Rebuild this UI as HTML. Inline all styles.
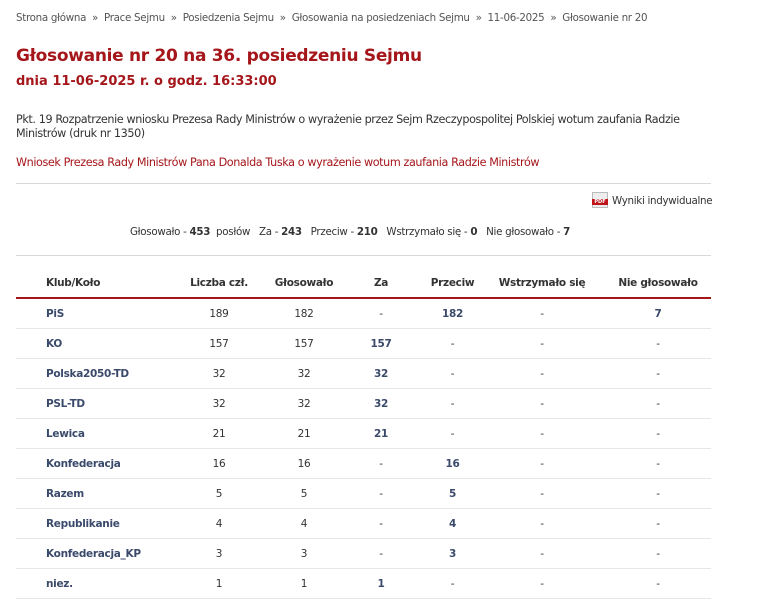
<!DOCTYPE html>
<html><head><meta charset="utf-8"><style>
body{margin:0;background:#fff;font-family:"DejaVu Sans","Liberation Sans",sans-serif;color:#333;width:765px;height:605px;overflow:hidden;position:relative}
.a{position:absolute;white-space:nowrap}
.bc{top:12px;left:16px;font-size:10.3px;color:#555;letter-spacing:-0.3px}
h1{position:absolute;top:46px;left:16px;margin:0;font-size:17px;color:#a5161b;font-weight:bold;letter-spacing:-0.3px}
h2{position:absolute;top:74px;left:16px;margin:0;font-size:13px;color:#a5161b;font-weight:bold}
.hr{position:absolute;left:16px;width:695px;height:1px;background:#d8d8d8}
table{position:absolute;top:269px;left:16px;width:695px;border-collapse:collapse;font-size:10.5px;letter-spacing:-0.3px;table-layout:fixed}
th{height:28px;padding:0;border-bottom:2px solid #a5161b;font-weight:bold;color:#333;text-align:center}
td{height:29px;padding:0;border-bottom:1px solid #e6e6e6;text-align:center;color:#333}
td:first-child,th:first-child{text-align:left;padding-left:30px;font-weight:bold;color:#3b4a6b}
th:first-child{color:#333}
b.n{color:#3b4a6b}
</style></head><body>
<div class="a bc">Strona główna &nbsp;» &nbsp;Prace Sejmu &nbsp;» &nbsp;Posiedzenia Sejmu &nbsp;» &nbsp;Głosowania na posiedzeniach Sejmu &nbsp;» &nbsp;11-06-2025 &nbsp;» &nbsp;Głosowanie nr 20</div>
<h1>Głosowanie nr 20 na 36. posiedzeniu Sejmu</h1>
<h2>dnia 11-06-2025 r. o godz. 16:33:00</h2>
<div class="a" style="top:113px;left:16px;font-size:11.2px;line-height:14px;color:#333;white-space:normal;width:700px;letter-spacing:-0.4px">Pkt. 19 Rozpatrzenie wniosku Prezesa Rady Ministrów o wyrażenie przez Sejm Rzeczypospolitej Polskiej wotum zaufania Radzie Ministrów (druk nr 1350)</div>
<div class="a" style="top:156px;left:16px;font-size:11.2px;color:#a5161b;letter-spacing:-0.4px">Wniosek Prezesa Rady Ministrów Pana Donalda Tuska o wyrażenie wotum zaufania Radzie Ministrów</div>
<div class="hr" style="top:183px"></div>
<div class="a" style="top:192px;left:592px;width:16px;height:16px;background:#eee;border:1px solid #bbb;box-sizing:border-box"><div style="position:absolute;left:-1px;bottom:2px;width:16px;height:6px;background:#c0141b;color:#fff;font-size:5px;line-height:6px;text-align:center;font-weight:bold">PDF</div></div>
<div class="a" style="top:195px;left:612px;font-size:10.3px;color:#333;letter-spacing:-0.3px">Wyniki indywidualne</div>
<div class="a" style="top:226px;left:130px;font-size:10.3px;color:#333;letter-spacing:-0.3px">Głosowało - <b>453</b> &nbsp;posłów &nbsp;&nbsp;Za - <b>243</b> &nbsp;&nbsp;Przeciw - <b>210</b> &nbsp;&nbsp;Wstrzymało się - <b>0</b> &nbsp;&nbsp;Nie głosowało - <b>7</b></div>
<div class="hr" style="top:255px"></div>
<table>
<colgroup><col style="width:150px"><col style="width:106px"><col style="width:64px"><col style="width:90px"><col style="width:53px"><col style="width:126px"><col></colgroup>
<tr><th>Klub/Koło</th><th>Liczba czł.</th><th>Głosowało</th><th>Za</th><th>Przeciw</th><th>Wstrzymało się</th><th>Nie głosowało</th></tr>
<tr><td>PiS</td><td>189</td><td>182</td><td>-</td><td><b class="n">182</b></td><td>-</td><td><b class="n">7</b></td></tr>
<tr><td>KO</td><td>157</td><td>157</td><td><b class="n">157</b></td><td>-</td><td>-</td><td>-</td></tr>
<tr><td>Polska2050-TD</td><td>32</td><td>32</td><td><b class="n">32</b></td><td>-</td><td>-</td><td>-</td></tr>
<tr><td>PSL-TD</td><td>32</td><td>32</td><td><b class="n">32</b></td><td>-</td><td>-</td><td>-</td></tr>
<tr><td>Lewica</td><td>21</td><td>21</td><td><b class="n">21</b></td><td>-</td><td>-</td><td>-</td></tr>
<tr><td>Konfederacja</td><td>16</td><td>16</td><td>-</td><td><b class="n">16</b></td><td>-</td><td>-</td></tr>
<tr><td>Razem</td><td>5</td><td>5</td><td>-</td><td><b class="n">5</b></td><td>-</td><td>-</td></tr>
<tr><td>Republikanie</td><td>4</td><td>4</td><td>-</td><td><b class="n">4</b></td><td>-</td><td>-</td></tr>
<tr><td>Konfederacja_KP</td><td>3</td><td>3</td><td>-</td><td><b class="n">3</b></td><td>-</td><td>-</td></tr>
<tr><td>niez.</td><td>1</td><td>1</td><td><b class="n">1</b></td><td>-</td><td>-</td><td>-</td></tr>
</table>
</body></html>
